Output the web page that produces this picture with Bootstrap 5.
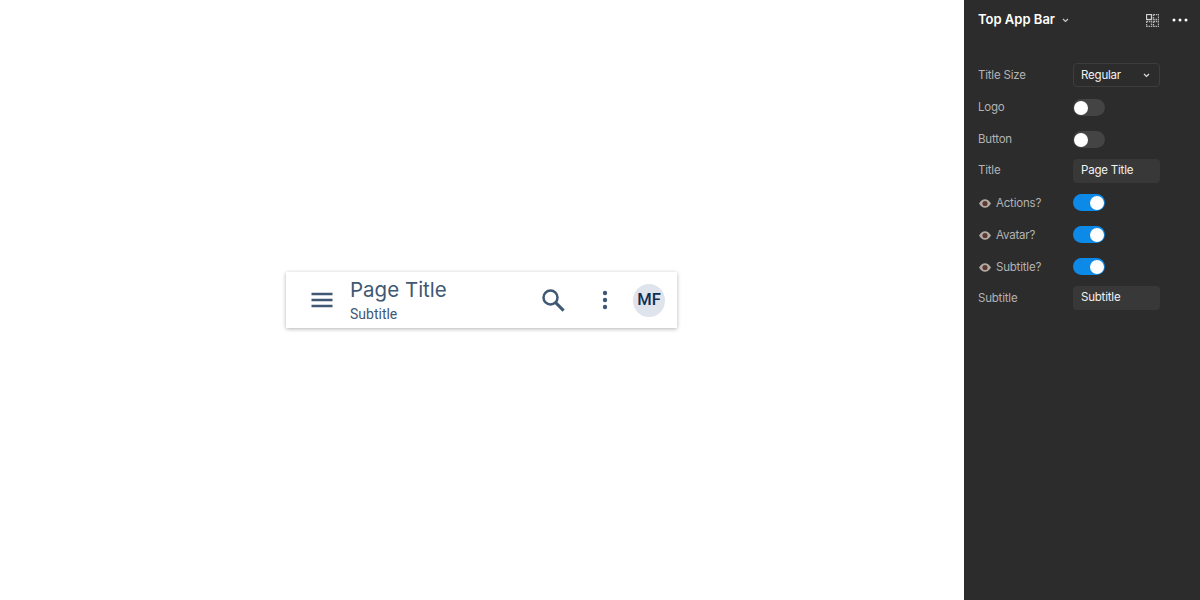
<!DOCTYPE html>
<html lang="en">
<head>
  <meta charset="UTF-8">
  <title>Top App Bar</title>
  <link href="https://cdn.jsdelivr.net/npm/bootstrap@5.3.0/dist/css/bootstrap.min.css" rel="stylesheet">
  <style>
    html, body { height: 100%; }
    body { background: #fff; overflow: hidden; }
    /* canvas + preview */
    .app-bar {
      width: 391px; height: 56px; padding: 0 12px 0 24px; margin-right: 1px;
      background: #fff; box-shadow: 0 1px 4px rgba(0,0,0,.3);
      color: #3f5873; gap: 16px;
    }
    .bar-title { font-family: Inter, sans-serif; font-size: 20.5px; line-height: 26px; }
    .bar-sub { font-family: Roboto, sans-serif; font-size: 14px; line-height: 18px; margin-top: 2px; }
    .bar-text { margin-bottom: 1px; }
    .bar-icon { width: 24px; height: 24px; }
    .bar-kebab { margin-left: 12px; }
    .bar-avatar {
      width: 32px; height: 33px; border-radius: 50%; background: #dfe3eb; color: #0f2f52;
      font-family: Roboto, sans-serif; font-size: 16.5px; font-weight: 500;
    }
    /* right panel */
    .side-panel {
      width: 236px; background: #2c2c2c; color: #b3b3b3;
      font-family: Inter, sans-serif; font-size: 11.5px; letter-spacing: -.2px; padding: 0 14px;
    }
    .panel-head { height: 40px; color: #fff; font-size: 13px; font-weight: 600; letter-spacing: 0; margin-right: -2px; }
    .panel-head .chev { margin-left: 7px; }
    .panel-head .grid-ico { margin-right: 13px; }
    .panel-body { margin-top: 19px; }
    .prop-row { height: 32px; margin: 0; }
    .prop-row.tight { height: 31.5px; }
    .prop-name { width: 95px; flex: none; padding-top: 2px; }
    .tight .prop-name { padding-top: 0; }
    .prop-eye { width: 12px; height: 9px; margin: 0 5px 0 1px; }
    .prop-field {
      width: 87px; height: 24px; border-radius: 4px; padding: 0 8px 1px; color: #f2f2f2; background: #383838;
    }
    .prop-field.outlined { background: transparent; border: 1px solid #3d3d3d; padding: 1px 9px 0 7px; }
    .prop-toggle { width: 32px; height: 17px; border-radius: 9px; background: #444; padding: 2px 0; }
    .prop-toggle i { display: block; width: 14px; height: 14px; border-radius: 50%; background: #fff; margin-left: 1px; }
    .prop-toggle.on { background: #0d8ae8; }
    .prop-toggle.on i { margin-left: 17px; }
  </style>
</head>
<body class="d-flex">
  <main class="flex-grow-1 d-flex align-items-center justify-content-center">
    <div class="app-bar d-flex align-items-center">
      <svg class="bar-icon" viewBox="0 0 24 24" fill="#3f5873"><path d="M1.500 4.800h21v2.500h-21zM1.500 10.800h21v2.500h-21zM1.500 16.800h21v2.500h-21z"/></svg>
      <div class="bar-text flex-grow-1">
        <div class="bar-title">Page Title</div>
        <div class="bar-sub">Subtitle</div>
      </div>
      <svg class="bar-icon" viewBox="0 0 24 24" fill="none" stroke="#3f5873"><circle cx="9.500" cy="9.500" r="7" stroke-width="2.500"/><path d="M14.600 14.600l8 8" stroke-width="3"/></svg>
      <svg class="bar-icon bar-kebab" viewBox="0 0 24 24" fill="#3f5873"><circle cx="12" cy="5" r="2.200"/><circle cx="12" cy="12" r="2.200"/><circle cx="12" cy="19" r="2.200"/></svg>
      <div class="bar-avatar d-flex align-items-center justify-content-center">MF</div>
    </div>
  </main>

  <aside class="side-panel flex-shrink-0">
    <div class="panel-head d-flex align-items-center">
      <span>Top App Bar</span>
      <svg class="chev" width="7" height="5" viewBox="0 0 7 5" fill="none" stroke="#ccc" stroke-width="1.200"><path d="M1 1l2.500 2.500L6 1"/></svg>
      <svg class="grid-ico ms-auto" width="13" height="13" viewBox="0 0 13 13" fill="none" stroke="#b8b8b8" stroke-width="1.300"><rect x=".5" y=".5" width="5" height="5" stroke="#d0d0d0"/><rect x="7.500" y=".5" width="5" height="5" stroke-dasharray="1.500 .8"/><rect x=".5" y="7.500" width="5" height="5" stroke-dasharray="1.500 .8"/><rect x="7.500" y="7.500" width="5" height="5" stroke-dasharray="1.500 .8"/></svg>
      <svg width="16" height="4" viewBox="0 0 16 4" fill="#fff"><circle cx="2" cy="2" r="1.500"/><circle cx="8" cy="2" r="1.500"/><circle cx="14" cy="2" r="1.500"/></svg>
    </div>
    <div class="panel-body">
      <div class="prop-row d-flex align-items-center">
        <div class="prop-name">Title Size</div>
        <div class="prop-field outlined d-flex align-items-center justify-content-between">Regular
          <svg width="7" height="5" viewBox="0 0 7 5" fill="none" stroke="#ddd" stroke-width="1.200"><path d="M1 1l2.500 2.500L6 1"/></svg>
        </div>
      </div>
      <div class="prop-row d-flex align-items-center">
        <div class="prop-name">Logo</div>
        <div class="prop-toggle"><i></i></div>
      </div>
      <div class="prop-row d-flex align-items-center">
        <div class="prop-name">Button</div>
        <div class="prop-toggle"><i></i></div>
      </div>
      <div class="prop-row tight d-flex align-items-center">
        <div class="prop-name">Title</div>
        <div class="prop-field d-flex align-items-center">Page Title</div>
      </div>
      <div class="prop-row d-flex align-items-center">
        <div class="prop-name d-flex align-items-center">
          <svg class="prop-eye" viewBox="0 0 14 10"><path d="M0 5c2-3.300 4.300-5 7-5s5 1.700 7 5c-2 3.300-4.300 5-7 5S2 8.300 0 5z" fill="#b5a9a4"/><circle cx="7" cy="5" r="3" fill="#5a3b33"/></svg>Actions?
        </div>
        <div class="prop-toggle on"><i></i></div>
      </div>
      <div class="prop-row d-flex align-items-center">
        <div class="prop-name d-flex align-items-center">
          <svg class="prop-eye" viewBox="0 0 14 10"><path d="M0 5c2-3.300 4.300-5 7-5s5 1.700 7 5c-2 3.300-4.300 5-7 5S2 8.300 0 5z" fill="#b5a9a4"/><circle cx="7" cy="5" r="3" fill="#5a3b33"/></svg>Avatar?
        </div>
        <div class="prop-toggle on"><i></i></div>
      </div>
      <div class="prop-row d-flex align-items-center">
        <div class="prop-name d-flex align-items-center">
          <svg class="prop-eye" viewBox="0 0 14 10"><path d="M0 5c2-3.300 4.300-5 7-5s5 1.700 7 5c-2 3.300-4.300 5-7 5S2 8.300 0 5z" fill="#b5a9a4"/><circle cx="7" cy="5" r="3" fill="#5a3b33"/></svg>Subtitle?
        </div>
        <div class="prop-toggle on"><i></i></div>
      </div>
      <div class="prop-row tight d-flex align-items-center">
        <div class="prop-name">Subtitle</div>
        <div class="prop-field d-flex align-items-center">Subtitle</div>
      </div>
    </div>
  </aside>
</body>
</html>
